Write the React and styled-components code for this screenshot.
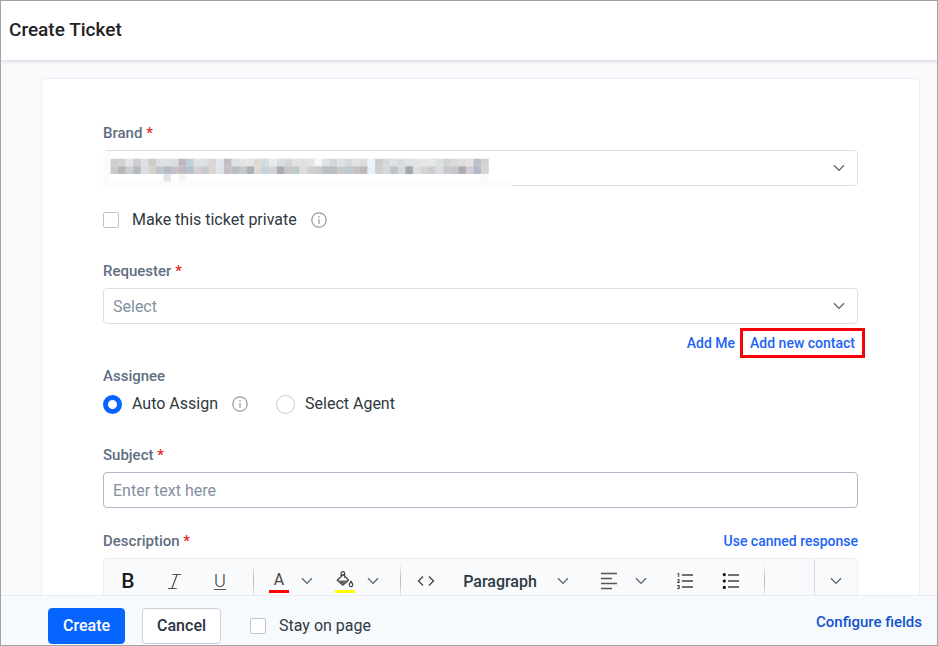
import React from 'react';
import styled, { createGlobalStyle } from 'styled-components';
import { Italic } from 'lucide-react';

const GlobalStyle = createGlobalStyle`
    * {
        box-sizing: border-box;
    }

    body {
        margin: 0;
        font-family: Roboto, "Liberation Sans", sans-serif;
        font-size: 16px;
        color: #2f3941;
    }

    button, input, select {
        font: inherit;
        color: inherit;
    }
`

const Page = styled.div`
    display: flex;
    flex-direction: column;
    height: 100vh;
    border: 1px solid #a3a3a3;
    background-color: #f8fafc;
`

const Header = styled.header`
    flex: none;
    padding: 17px 8px 18px;
    background-color: #fff;
    box-shadow: 0 1px 3px 1px #dcdfe8;
    clip-path: inset(0 0 -6px 0);
    z-index: 1;

    h1 {
        margin: 0;
        font-size: 19px;
        font-weight: 500;
        line-height: 24px;
        color: #222;
    }
`

const Main = styled.main`
    flex: 1;
    min-height: 0;
    overflow: hidden;
    padding: 18px 17px 0 40px;
`

const Card = styled.form`
    padding: 45px 61px;
    border: 1px solid #ebeef4;
    border-radius: 4px;
    background-color: #fff;
`

const Field = styled.div`
    display: flex;
    flex-direction: column;
    gap: 8px;
    margin-bottom: ${props => props.$space || 24}px;
`

const LabelRow = styled.div`
    display: flex;
    justify-content: space-between;
    margin-bottom: 8px;
`

const Label = styled.label`
    font-size: 15px;
    font-weight: 500;
    line-height: 18px;
    color: #5f6e82;

    span {
        color: #e8261c;
    }
`

const SelectWrap = styled.div`
    display: grid;
    align-items: center;

    > * {
        grid-area: 1 / 1;
    }

    > svg:last-child {
        justify-self: end;
        margin-right: 13px;
        pointer-events: none;
    }
`

const SelectBox = styled.select`
    appearance: none;
    width: 100%;
    height: 36px;
    padding: 0 9px;
    border: 1px solid #d9deea;
    border-radius: 4px;
    background-color: #fff;
    color: #8490a2;
`

const TextInput = styled.input`
    width: 100%;
    height: 36px;
    padding: 0 9px;
    border: 1px solid #aebaca;
    border-radius: 4px;
    background-color: #fff;

    &::placeholder {
        color: #8490a2;
        opacity: 1;
    }
`

const MaskSvg = styled.svg`
    align-self: start;
    margin: 1px 0 -3px;
    pointer-events: none;
`

const Choices = styled.div`
    display: flex;
    align-items: center;
    gap: 14px;
    min-height: 20px;
    margin-bottom: 32px;
`

const Choice = styled.label`
    display: flex;
    align-items: center;
    gap: ${props => props.$gap || 13}px;
    line-height: 20px;
`

const SecondChoice = styled(Choice)`
    margin-left: 14px;
`

const Checkbox = styled.input`
    appearance: none;
    width: 16px;
    height: 16px;
    margin: 0;
    border: 1px solid #bcc5d8;
    border-radius: 2px;
    background-color: #fff;
`

const Radio = styled.input`
    appearance: none;
    width: 19px;
    height: 19px;
    margin: 0;
    border: 1px solid #c3cbdb;
    border-radius: 50%;
    background-color: #fff;

    &:checked {
        border: 5px solid #0765ff;
    }
`

const Assignee = styled.div`
    display: flex;
    flex-direction: column;
    gap: 9px;
`

const Links = styled.div`
    display: flex;
    justify-content: flex-end;
    align-items: center;
    gap: 5px;
    margin-bottom: 9px;
`

const TextLink = styled.a`
    font-size: 14px;
    font-weight: 500;
    line-height: 18px;
    color: #1d64f5;
    text-decoration: none;
`

const Highlight = styled.div`
    display: flex;
    margin-right: -7px;
    padding: 3px 7px;
    border: 3px solid #fa0008;
`

const Toolbar = styled.div`
    display: flex;
    align-items: center;
    height: 46px;
    padding-left: 1px;
    border: 1px solid #ebeef4;
    border-radius: 4px;
    background-color: #f9fafc;
`

const Tool = styled.button`
    display: flex;
    align-items: center;
    justify-content: center;
    gap: ${props => props.$gap || 12}px;
    flex: none;
    width: ${props => props.$w || 46}px;
    height: 44px;
    padding: 0;
    border: 0;
    background: none;
    font-weight: 500;
`

const Bold = styled.span`
    font-size: 21px;
    color: #1b1b1b;
`

const Underlined = styled.span`
    border-bottom: 1px solid #555;
    font-size: 18px;
    font-weight: 300;
    line-height: 16px;
`

const Swatch = styled.span`
    display: flex;
    align-items: center;
    justify-content: center;
    width: 20px;
    height: 23px;
    border-bottom: 3px solid ${props => props.$color};
    font-weight: 400;
    color: #444;
`

const Divider = styled.span`
    flex: none;
    width: 1px;
    height: 36px;
    margin: 0 4px 0 10px;
    background: linear-gradient(transparent, #b3b6bb, transparent);
`

const MoreTool = styled(Tool)`
    margin-left: auto;
    border-left: 1px solid #d3d9e6;
`

const Footer = styled.footer`
    display: flex;
    align-items: center;
    flex: none;
    height: 50px;
    padding: 10px 15px 0 47px;
    border-top: 1px solid #e9ecf2;
    background-color: #f7fafd;
`

const Button = styled.button`
    height: 36px;
    padding: 0 14px;
    margin-right: 17px;
    border: 1px solid ${props => (props.$primary ? '#0765ff' : '#c9d0dc')};
    border-radius: 4px;
    background-color: ${props => (props.$primary ? '#0765ff' : '#fff')};
    color: ${props => (props.$primary ? '#fff' : '#2a3240')};
    font-weight: 500;
`

const StayChoice = styled(Choice)`
    margin-left: 12px;
    margin-right: auto;
`

const FooterLink = styled(TextLink)`
    align-self: flex-start;
    font-size: 15px;
    line-height: 32px;
    color: #1253cc;
`

// pixelated cover for the brand name, one colour per block
const MASK_ROWS = [
    'd3cfd0 d3d3d6 e3e6e4 cdccd6 dcdfe4 cccbc8 dcdfe1 dce0e3 dcdce0 c0b8be bfcfd8 dee1e4 dee1e4 ddd4d4 e0e6ed c3bdc0 dde2e5 e3e5e5 e4e5e6 dddad8 d5dce0 e8e9e9 dbdee0 d4d8d9 e2e2e4 dfe0df e3e5e4 f5f6f7 dfe1e3 d3d6d7 e0e1e3 d5dadd e0e2e3 dcdcdc eaf2fa cbcccd d5d7d9 dfe1e2 d7dce0 e1e3e3 e2e4e4 e5e6e7 e5e6e6 dedfdf d0d4d8 d9dada dedede e2e2e3 bbbfca d2d3d1',
    'cdc9c9 b5b6bb cdcdd0 b4b8c2 dadce0 d3d3ce c0c5ca b2bbc6 c6c0c6 c0b9be b3c3cd d7cfd0 c3cad0 ddd4d3 dde3ea c4bfc2 b8bec6 c2c7cb adb0b8 dcd8d5 c5d1dd d2d4d6 a9acb5 c9c4c6 c0c9cc dcdedd d3cfcf c7ccd0 b8bfc5 b8bfc3 c8c9cb bcc9d1 c5c2c6 bfb9be e8f1f9 cdcecf d6d7d9 bfc3c6 d5d8db a3a8ab dcdfe0 d6d3d3 c9ced4 dddddd c6c9cd c5c6c8 adaeb1 d2cdd2 b2b8c8 d3d4d2',
].map(row => row.split(' '));

const BLOCK = 7.56;

const BrandMask = () => (
    <MaskSvg width="408" height="37" viewBox="0 0 408 37">
        <rect width="408" height="37" fill="#f9fbfd" />
        <rect x="7" width="401" height="30" fill="#fff" />
        {MASK_ROWS.map((row, y) => row.map((color, x) => (
            <rect key={`${x}-${y}`} x={7.5 + x * BLOCK} y={7.7 + y * BLOCK} width="7.8" height="7.7" fill={`#${color}`} />
        )))}
        <rect x="60.4" y="22.8" width="7.6" height="7.5" fill="#e4e5e8" />
        <rect x="75.5" y="22.8" width="7.6" height="7.5" fill="#f5f5f6" />
        <rect x="378" y="22.8" width="7.6" height="7.5" fill="#f8f9f9" />
    </MaskSvg>
);

const Chevron = () => (
    <svg width="12" height="8" viewBox="0 0 12 8" fill="none" stroke="#5c636c" strokeWidth="1.3">
        <path d="M1 1.2 6 6.4 11 1.2" />
    </svg>
);

const InfoIcon = () => (
    <svg width="16" height="16" viewBox="0 0 16 16" fill="none" stroke="#999" strokeWidth="1.2">
        <circle cx="8" cy="8" r="7.2" />
        <path d="M8 7v5M8 4v1.6" />
    </svg>
);

const BucketIcon = () => (
    <svg width="18" height="17" viewBox="0 0 50 48" fill="none" stroke="#3c3c3c" strokeWidth="3.4">
        <path d="M14 17V7a5 5 0 0 1 10 0v12M20 10 3 26l16 14 16-14Z" />
        <path d="M4 27h30L19 40Z" fill="#666" stroke="none" />
        <path d="M42 29c3 4 5 7 5 10a5 5 0 0 1-10 0c0-3 2-6 5-10Z" />
    </svg>
);

const CodeIcon = () => (
    <svg width="18" height="12" viewBox="0 0 18 12" fill="none" stroke="#444" strokeWidth="1.3">
        <path d="M6 1.5 1.5 6 6 10.5M12 1.5 16.5 6 12 10.5" />
    </svg>
);

const AlignIcon = () => (
    <svg width="16" height="18" viewBox="0 0 16 18" stroke="#555" strokeWidth="1.3">
        <path d="M0 1.5h16M0 6.5h11M0 11.5h16M0 16.5h11" />
    </svg>
);

const NumberedIcon = () => (
    <svg width="18" height="18" viewBox="0 0 18 18" stroke="#444" strokeWidth="1.3">
        <path d="M6 3h11M6 9h11M6 15h11" />
        <g fill="#111" stroke="none" fontSize="5" fontWeight="900">
            <text x="1" y="5">1</text>
            <text x="1" y="11">2</text>
            <text x="1" y="17">3</text>
        </g>
    </svg>
);

const BulletIcon = () => (
    <svg width="18" height="18" viewBox="0 0 18 18" stroke="#444" strokeWidth="1.3">
        <path d="M6 3h11M6 9h11M6 15h11" />
        <g fill="#111" stroke="none">
            <circle cx="2.3" cy="2.6" r="1.6" />
            <circle cx="2.3" cy="9" r="1.6" />
            <circle cx="2.3" cy="15.4" r="1.6" />
        </g>
    </svg>
);

export default function App() {
    return (
        <Page>
            <GlobalStyle />
            <Header>
                <h1>Create Ticket</h1>
            </Header>
            <Main>
                <Card>
                    <Field>
                        <Label htmlFor="brand">Brand <span>*</span></Label>
                        <SelectWrap>
                            <SelectBox id="brand" />
                            <BrandMask />
                            <Chevron />
                        </SelectWrap>
                    </Field>
                    <Choices>
                        <Choice>
                            <Checkbox type="checkbox" />
                            Make this ticket private
                        </Choice>
                        <InfoIcon />
                    </Choices>
                    <Field $space={4}>
                        <Label htmlFor="requester">Requester <span>*</span></Label>
                        <SelectWrap>
                            <SelectBox id="requester">
                                <option>Select</option>
                            </SelectBox>
                            <Chevron />
                        </SelectWrap>
                    </Field>
                    <Links>
                        <TextLink href="#me">Add Me</TextLink>
                        <Highlight>
                            <TextLink href="#contact">Add new contact</TextLink>
                        </Highlight>
                    </Links>
                    <Assignee role="radiogroup" aria-labelledby="assignee">
                        <Label as="div" id="assignee">Assignee</Label>
                        <Choices>
                            <Choice $gap={10}>
                                <Radio type="radio" name="assignee" defaultChecked />
                                Auto Assign
                            </Choice>
                            <InfoIcon />
                            <SecondChoice $gap={10}>
                                <Radio type="radio" name="assignee" />
                                Select Agent
                            </SecondChoice>
                        </Choices>
                    </Assignee>
                    <Field>
                        <Label htmlFor="subject">Subject <span>*</span></Label>
                        <TextInput id="subject" placeholder="Enter text here" />
                    </Field>
                    <LabelRow>
                        <Label as="div">Description <span>*</span></Label>
                        <TextLink href="#canned">Use canned response</TextLink>
                    </LabelRow>
                    <Toolbar>
                        <Tool type="button"><Bold>B</Bold></Tool>
                        <Tool type="button" aria-label="Italic">
                            <Italic size={21} strokeWidth={1.4} color="#555" />
                        </Tool>
                        <Tool type="button"><Underlined>U</Underlined></Tool>
                        <Divider />
                        <Tool type="button" $w={66}>
                            <Swatch $color="#f00">A</Swatch>
                            <Chevron />
                        </Tool>
                        <Tool type="button" $w={66} aria-label="Background colour">
                            <Swatch $color="#ff0"><BucketIcon /></Swatch>
                            <Chevron />
                        </Tool>
                        <Divider />
                        <Tool type="button" $w={42} aria-label="Code"><CodeIcon /></Tool>
                        <Tool type="button" $w={138} $gap={20}>
                            Paragraph
                            <Chevron />
                        </Tool>
                        <Tool type="button" $w={77} $gap={18} aria-label="Align">
                            <AlignIcon />
                            <Chevron />
                        </Tool>
                        <Tool type="button" aria-label="Numbered list"><NumberedIcon /></Tool>
                        <Tool type="button" aria-label="Bulleted list"><BulletIcon /></Tool>
                        <Divider />
                        <MoreTool type="button" $w={43} aria-label="More"><Chevron /></MoreTool>
                    </Toolbar>
                </Card>
            </Main>
            <Footer>
                <Button type="button" $primary>Create</Button>
                <Button type="button">Cancel</Button>
                <StayChoice>
                    <Checkbox type="checkbox" />
                    Stay on page
                </StayChoice>
                <FooterLink href="#fields">Configure fields</FooterLink>
            </Footer>
        </Page>
    );
}
